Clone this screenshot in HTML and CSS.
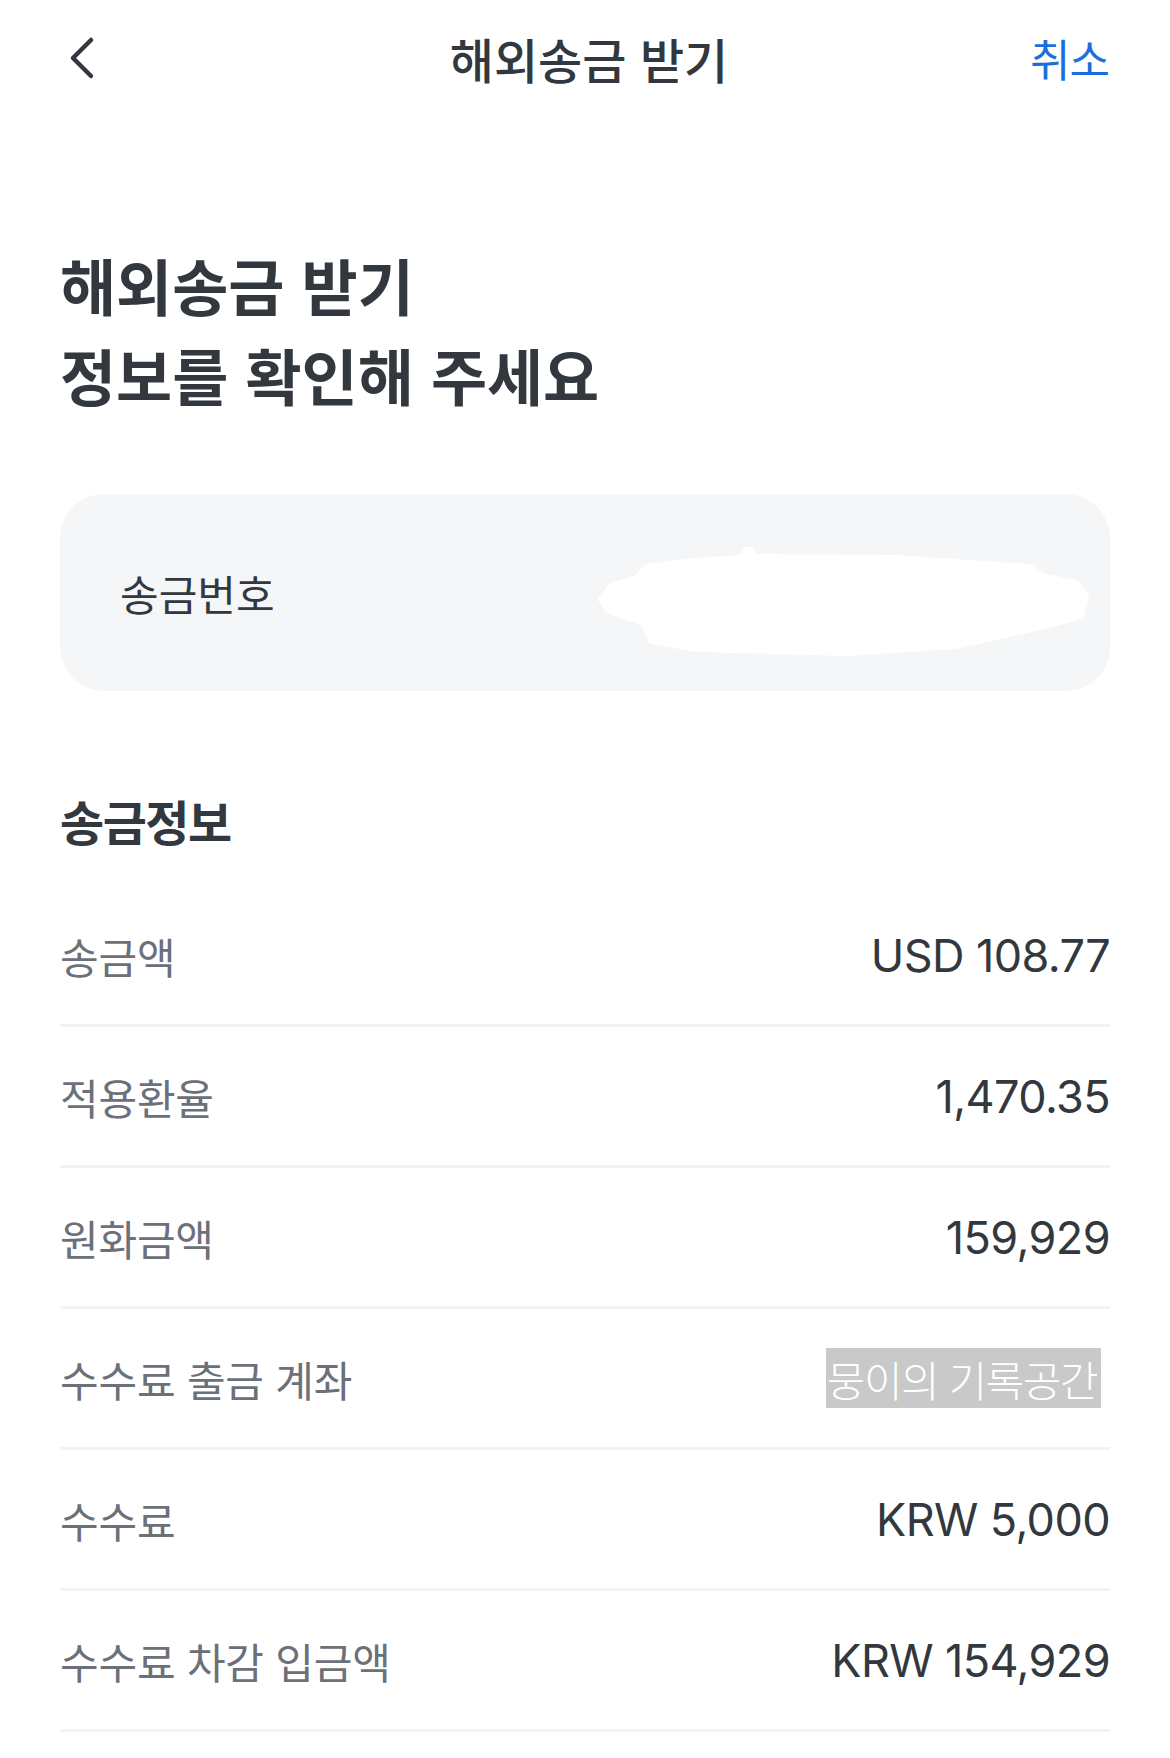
FILE: index.html
```html
<!DOCTYPE html>
<html lang="ko">
<head>
<meta charset="utf-8">
<title>해외송금 받기</title>
<link rel="stylesheet" href="styles.css">
</head>
<body>
<div class="page">
  <header class="nav">
    <button class="nav-back" aria-label="뒤로">
      <svg width="28" height="46" viewBox="0 0 28 46"><path d="M22 5 L4 23 L22 41" fill="none" stroke="#33383e" stroke-width="4.5" stroke-linecap="round" stroke-linejoin="round"/></svg>
    </button>
    <div class="nav-title">해외송금 받기</div>
    <div class="nav-cancel">취소</div>
  </header>

  <main class="content">
    <h1 class="headline">해외송금 받기<br>정보를 확인해 주세요</h1>

    <section class="card">
      <span class="card-label">송금번호</span>
      <svg class="redact" width="496" height="118" viewBox="0 0 496 118"><path d="M50 26 L100 20 L145 17 L150 9 L155 9 L158 16 L300 17 L435 26 L445 35 L480 42 L490 55 L485 75 L440 87 L360 105 L250 112 L100 108 L55 100 L48 82 L12 70 L5 58 L15 45 L40 38 Z" fill="#ffffff" stroke="#ffffff" stroke-width="6" stroke-linejoin="round"/></svg>
    </section>

    <h2 class="section-title">송금정보</h2>

    <div class="list">
      <div class="row"><span class="row-label">송금액</span><span class="row-value">USD 108.77</span></div>
      <div class="row"><span class="row-label">적용환율</span><span class="row-value">1,470.35</span></div>
      <div class="row"><span class="row-label">원화금액</span><span class="row-value">159,929</span></div>
      <div class="row"><span class="row-label">수수료 출금 계좌</span><span class="watermark">뭉이의 기록공간</span></div>
      <div class="row"><span class="row-label">수수료</span><span class="row-value">KRW 5,000</span></div>
      <div class="row"><span class="row-label">수수료 차감 입금액</span><span class="row-value">KRW 154,929</span></div>
    </div>
  </main>
</div>
</body>
</html>
```

FILE: styles.css
```css
html, body {
  margin: 0;
  padding: 0;
  background: #ffffff;
}

body {
  font-family: "Noto Sans CJK KR", "Noto Sans", sans-serif;
  color: #32383e;
}

.page {
  width: 1170px;
}

.nav {
  height: 116px;
  display: grid;
  grid-template-columns: 1fr auto 1fr;
  align-items: center;
  padding: 0 61px 0 69px;
  box-sizing: border-box;
}

.nav-back {
  justify-self: start;
  display: flex;
  align-items: center;
  padding: 0;
  margin: 0;
  border: 0;
  background: none;
}

.nav-title {
  font-size: 48px;
  font-weight: 500;
  letter-spacing: 0;
  line-height: 1;
  color: #32383e;
}

.nav-cancel {
  justify-self: end;
  font-size: 44px;
  font-weight: 400;
  letter-spacing: -1px;
  line-height: 1;
  color: #1b6fdc;
}

.content {
  padding: 0 60px;
}

.headline {
  margin: 124px 0 0;
  font-size: 61px;
  font-weight: 700;
  line-height: 90px;
  letter-spacing: 0;
  color: #32383e;
}

.card {
  margin-top: 74px;
  height: 197px;
  box-sizing: border-box;
  background: #f5f6f7;
  border-radius: 44px;
  display: flex;
  align-items: center;
  justify-content: space-between;
  padding: 0 18px 0 60px;
}

.card-label {
  font-size: 42px;
  letter-spacing: 0;
  color: #32383e;
}

.redact {
  display: block;
  margin-top: 14px;
}

.section-title {
  margin: 99px 0 0;
  font-size: 48px;
  font-weight: 700;
  line-height: 60px;
  letter-spacing: -1.5px;
  color: #32383e;
}

.list {
  margin-top: 36px;
}

.row {
  height: 141px;
  box-sizing: border-box;
  border-bottom: 3px solid #f2f3f5;
  display: flex;
  align-items: center;
  justify-content: space-between;
}

.row-label {
  font-size: 42px;
  letter-spacing: -0.2px;
  color: #6b7079;
}

.row-value {
  font-family: "Inter", "Liberation Sans", sans-serif;
  font-size: 45px;
  letter-spacing: -0.6px;
  color: #32383e;
}

.watermark {
  display: flex;
  align-items: center;
  height: 60px;
  margin-right: 9px;
  padding: 0 4px 0 1px;
  background: #c9c9c9;
  color: #ffffff;
  font-size: 42px;
  font-weight: 300;
  letter-spacing: -1.5px;
}
```
